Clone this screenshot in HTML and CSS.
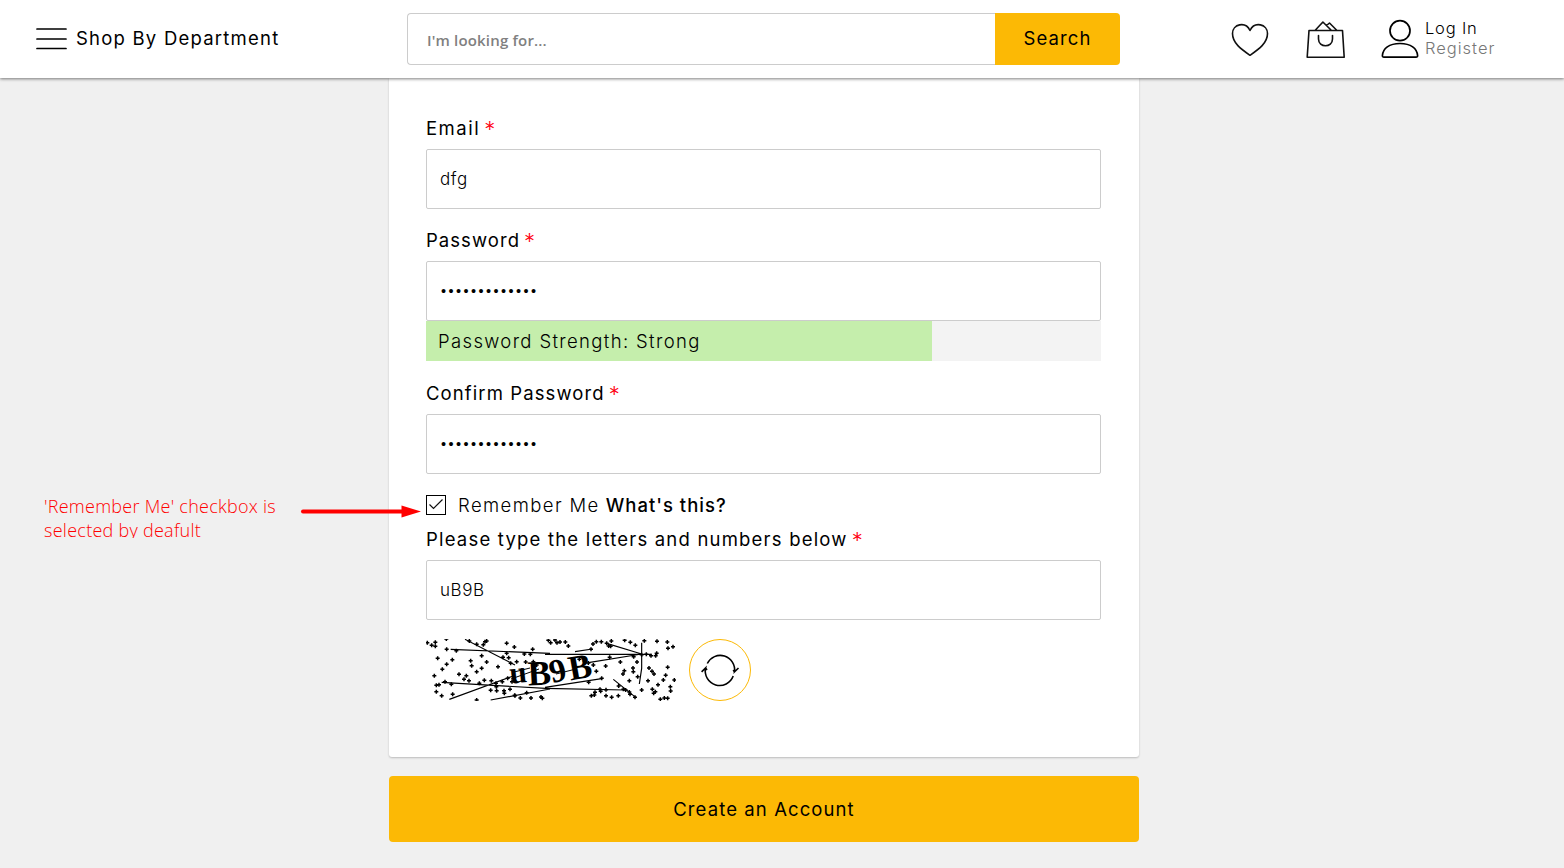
FILE: index.html
```html
<!DOCTYPE html>
<html lang="en">
<head>
<meta charset="utf-8">
<title>Create an Account</title>
<link rel="stylesheet" href="styles.css">
</head>
<body>
<header class="header">
  <div class="menu">
    <svg width="32" height="24" viewBox="0 0 32 24"><path d="M1 2H30M1 12H30M1 21.500H30" stroke="#000" stroke-width="1.7" stroke-linecap="round"/></svg>
    <span class="menu-text">Shop By Department</span>
  </div>
  <div class="search"><div class="search-field"><span class="placeholder">I'm looking for...</span></div><div class="search-btn"><span class="search-text">Search</span></div></div>
  <div class="tools">
    <svg class="heart" width="38" height="34" viewBox="0 0 38 34" fill="none" stroke="#111" stroke-width="1.6" stroke-linejoin="round"><path d="M19 32.300C10 26 1.500 20 1.500 10.500C1.500 1 14.500-2 19 7.500C23.500-2 36.500 1 36.500 10.500C36.500 20 28 26 19 32.300Z"/></svg>
    <svg class="bag" width="40" height="40" viewBox="0 0 40 40" fill="none" stroke="#111" stroke-width="1.600" stroke-linejoin="round" stroke-linecap="round"><path d="M3 11.500H36.500L38.200 38.200H1.200ZM9 11.500L16.900 3 25.500 11.500M20.500 6.500L23.500 4 31 11.500M12.500 16.500V20C12.500 29 26.500 29 26.500 20V16.500"/></svg>
    <svg class="user" width="38" height="40" viewBox="0 0 38 40" fill="none" stroke="#000" stroke-width="1.7"><circle cx="19" cy="11.700" r="10"/><path d="M3 38.200Q1.300 38.200 1.400 36.500C2 29.500 8 24.500 19 24.500S36 29.500 36.600 36.500Q36.700 38.200 35 38.200Z"/></svg>
    <div class="account"><span class="login">Log In</span><span class="register">Register</span></div>
  </div>
</header>
<main class="main">
  <section class="card">
    <div class="label"><span class="l-email">Email</span><i class="star">*</i></div>
    <div class="input"><span class="value">dfg</span></div>
    <div class="label gap"><span class="l-pass">Password</span><i class="star">*</i></div>
    <div class="input secret"><span class="dots">•••••••••••••</span></div>
    <div class="meter"><div class="meter-fill"><span class="meter-text">Password Strength: Strong</span></div></div>
    <div class="label gap-meter"><span class="l-conf">Confirm Password</span><i class="star">*</i></div>
    <div class="input secret"><span class="dots">•••••••••••••</span></div>
    <div class="remember">
      <span class="check"><svg width="18" height="18" viewBox="0 0 18 18"><path d="M2.500 8.500L6.500 12.500 15.500 3.500" fill="none" stroke="#111" stroke-width="1.2"/></svg></span>
      <span class="rem-text">Remember Me</span><span class="what">What's this?</span>
    </div>
    <div class="label captcha-label"><span class="l-type">Please type the letters and numbers below</span><i class="star">*</i></div>
    <div class="input"><span class="value">uB9B</span></div>
    <div class="captcha">
      <svg class="captcha-img" width="250" height="62" viewBox="0 0 250 62">
        <defs><marker id="p" markerUnits="userSpaceOnUse" markerWidth="16" markerHeight="16" refX="8" refY="8"><path d="M2 8H14M8 2V14" stroke="#000" stroke-width="4.500"/></marker></defs>
        <g fill="none" stroke="#000" stroke-width="3.500">
          <g transform="translate(-6 -9) scale(.33333)">
            <path d="M92 58L390 70M135 28L285 105M65 157L390 176M88 208L280 138M212 210L390 177"/>
            <polyline class="specks" points="22,38 35,46 46,37 46,49 79,27 80,58 109,62 148,33 170,43 190,44 195,35 200,33 260,40 283,51 338,58 53,85 97,89 80,103 67,118 43,137 117,133 139,137 132,148 147,152 152,92 155,107 185,77 200,96 185,115 170,125 234,110 249,82 260,70 266,83 272,100 290,95 313,72 331,73 317,96 75,155 94,163 57,164 49,166 49,185 65,197 98,193 170,210 178,160 193,151 214,152 228,160 212,181 229,170 230,182 247,155 252,182 253,190 270,178 284,196 285,197 320,188 301,204 333,204 363,201 367,205 276,155 263,145 306,120 350,105 340,95"/>
          </g>
          <g transform="translate(119 -9) scale(.33333)">
            <path d="M0 73H320M0 175L240 180M0 172L175 145M185 40L290 72M290 38V115L283 162M205 148L272 202M90 65L142 57M130 98L290 72"/>
            <polyline class="specks" points="10,31 17,38 30,30 36,38 45,36 61,36 70,48 138,58 154,35 144,42 169,35 185,40 191,48 197,49 199,33 239,31 256,37 271,46 298,32 336,34 367,36 369,55 384,50 335,70 304,73 318,77 332,77 290,74 266,80 276,96 226,96 194,82 182,108 103,88 119,94 130,99 145,105 154,124 131,157 170,145 238,122 264,114 265,125 234,132 312,114 321,124 327,132 278,140 362,136 368,112 355,150 388,150 309,152 339,164 376,170 377,183 322,178 326,190 331,185 290,180 253,152 221,168 235,178 242,180 253,186 255,193 270,202 220,197 200,202 183,197 183,179 167,184 165,178 150,187 139,197 148,195 346,208 358,204 368,205"/>
          </g>
        </g>
        <g class="code"><text x="84" y="44" transform="rotate(-6 91 40)">u</text><text x="102" y="46" class="bigger" transform="rotate(-3 110 40)">B</text><text x="124" y="43" class="nine" transform="rotate(-14 130 34)">9</text><text x="143" y="40" class="bigger" transform="rotate(-10 152 32)">B</text></g>
        <path d="M85 40L113 30M88 33L104 29M130 35L150 30" stroke="#000" fill="none"/>
      </svg>
      <span class="reload"><svg width="40" height="36" viewBox="0 0 40 36" fill="none" stroke="#000" stroke-width="1.600"><path d="M7.300 11.500A14.400 14.400 0 0 1 34.500 19.800L38.500 16M34.600 20L33.200 18M33.200 24A14.400 14.400 0 0 1 5.600 16L1.600 19.800M5.600 16L7 18"/></svg></span>
    </div>
  </section>
  <div class="create"><span class="create-text">Create an Account</span></div>
</main>
<div class="note"><span class="note1">'Remember Me' checkbox is</span><span class="note2">selected by deafult</span></div>
<svg class="arrow" width="122" height="14" viewBox="0 0 122 14"><path d="M3 7.500H104" stroke="#f00" stroke-width="4" stroke-linecap="round"/><path d="M101.500 1.500V13.500L121 7.500Z" fill="#f00"/></svg>
</body>
</html>
```
FILE: styles.css
```css
* { box-sizing: border-box; }
body { margin: 0; width: 1564px; height: 868px; overflow: hidden; position: relative; background: #f0f0f0; color: #000; font: 430 18.5px/24px Inter, "Liberation Sans", sans-serif; }
span { white-space: nowrap; }
svg { display: block; flex: none; }
.header { position: relative; z-index: 1; height: 78px; background: #fff; box-shadow: 0 1px 3px rgba(0,0,0,.5); display: flex; }
.menu { width: 407px; padding: 27px 0 0 36px; display: flex; gap: 8px; align-items: flex-start; }
.menu-text { line-height: 23px; letter-spacing: 1.22px; }
.search { width: 713px; height: 52px; margin-top: 13px; display: flex; }
.search-field { width: 588px; border: 1px solid #ccc; border-right: 0; border-radius: 4px 0 0 4px; padding: 14px 0 0 19px; }
.placeholder { display: block; font: 600 15px/24px "Open Sans", sans-serif; letter-spacing: .17px; color: #808080; }
.search-btn { flex: 1; background: #fcb905; border-radius: 0 4px 4px 0; text-align: center; padding-top: 13px; }
.search-text { letter-spacing: 1.1px; }
.tools { display: flex; align-items: flex-start; }
.heart { margin: 23px 0 0 111px; }
.bag { margin: 19px 0 0 37px; }
.user { margin: 19px 0 0 35px; }
.account { display: flex; flex-direction: column; margin: 18px 0 0 6px; font-size: 16.5px; font-weight: 350; line-height: 20px; }
.login { letter-spacing: .8px; }
.register { color: #777; font-weight: 300; letter-spacing: 1px; }
.main { width: 750px; margin-left: 389px; }
.card { height: 679px; background: #fff; border-radius: 0 0 3px 3px; box-shadow: 0 1px 2px rgba(0,0,0,.22); padding: 38px 38px 0 37px; }
.label { height: 33px; display: flex; gap: 4px; }
.l-email { letter-spacing: 1.5px; }
.l-pass { letter-spacing: 1.05px; }
.l-conf { letter-spacing: 1.1px; }
.l-type { letter-spacing: 1.2px; }
.star { color: #f01; font-style: normal; font-weight: 350; font-size: 22px; line-height: 27px; }
.gap { margin-top: 19px; }
.gap-meter { margin-top: 20px; }
.input { height: 60px; border: 1px solid #ccc; border-radius: 2px; padding: 17px 0 0 13px; }
.value { display: block; font-size: 17px; font-weight: 350; letter-spacing: .6px; }
.secret { padding: 17px 0 0 14px; }
.dots { display: block; font: 14.500px/24px "Liberation Sans", sans-serif; letter-spacing: 2.43px; }
.meter { height: 40px; background: #f3f3f3; }
.meter-fill { width: 75%; height: 40px; background: #c5eeac; padding: 8px 0 0 12px; }
.meter-text { letter-spacing: 1.35px; font-weight: 300; }
.remember { display: flex; height: 24px; margin-top: 19px; }
.check { width: 20px; height: 20px; border: 1px solid #000; margin: 2px 12px 0 0; }
.rem-text { font-weight: 300; letter-spacing: 1.4px; margin-right: 6px; }
.what { letter-spacing: 1px; font-weight: 460; }
.captcha-label { margin-top: 10px; }
.captcha { display: flex; margin-top: 19px; gap: 13px; }
.specks { stroke: none; marker-start: url(#p); marker-mid: url(#p); marker-end: url(#p); }
.code { font: 700 31px "Liberation Serif", serif; }
.bigger { font-size: 35px; }
.nine { font-size: 33px; font-weight: 700; }
.reload { width: 62px; height: 62px; border: 1px solid #fcb905; border-radius: 50%; display: flex; align-items: center; justify-content: center; }
.create { height: 66px; margin-top: 19px; background: #fcb905; border-radius: 4px; text-align: center; padding-top: 21px; }
.create-text { letter-spacing: 1.1px; }
.note { position: absolute; left: 44px; top: 494px; display: flex; flex-direction: column; color: #f00; font: 350 18px/24px "Open Sans", sans-serif; letter-spacing: .27px; }
.note2 { height: 20px; overflow: hidden; }
.arrow { position: absolute; left: 300px; top: 504px; }
```
